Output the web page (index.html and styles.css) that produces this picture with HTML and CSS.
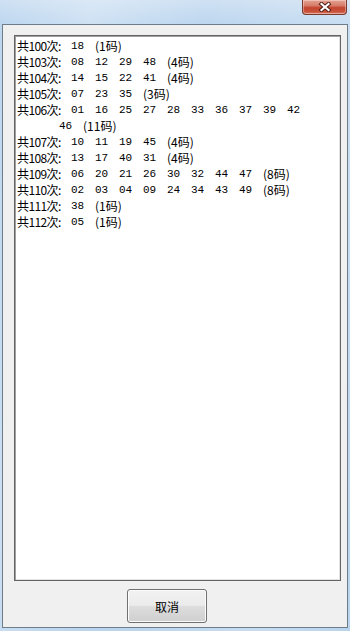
FILE: index.html
```html
<!DOCTYPE html>
<html>
<head>
<meta charset="utf-8">
<link rel="stylesheet" href="styles.css">
</head>
<body>
<div class="window">
  <div class="caption">
    <div class="close">
      <svg width="14" height="10" viewBox="0 0 14 10">
        <path d="M3.5 2 L10.5 8 M10.5 2 L3.5 8" stroke="#4a1a12" stroke-width="4" stroke-linecap="square" fill="none"/>
        <path d="M3.5 2 L10.5 8 M10.5 2 L3.5 8" stroke="#ffffff" stroke-width="2.2" stroke-linecap="square" fill="none"/>
      </svg>
    </div>
  </div>
  <div class="client">
    <div class="textbox">
      <div class="row"><span class="lbl">共100次:</span><span class="n">18</span><span class="c">(1码)</span></div>
      <div class="row"><span class="lbl">共103次:</span><span class="n">08</span><span class="n">12</span><span class="n">29</span><span class="n">48</span><span class="c">(4码)</span></div>
      <div class="row"><span class="lbl">共104次:</span><span class="n">14</span><span class="n">15</span><span class="n">22</span><span class="n">41</span><span class="c">(4码)</span></div>
      <div class="row"><span class="lbl">共105次:</span><span class="n">07</span><span class="n">23</span><span class="n">35</span><span class="c">(3码)</span></div>
      <div class="row"><span class="lbl">共106次:</span><span class="n">01</span><span class="n">16</span><span class="n">25</span><span class="n">27</span><span class="n">28</span><span class="n">33</span><span class="n">36</span><span class="n">37</span><span class="n">39</span><span class="n">42</span></div>
      <div class="row wrap"><span class="n">46</span><span class="c">(11码)</span></div>
      <div class="row"><span class="lbl">共107次:</span><span class="n">10</span><span class="n">11</span><span class="n">19</span><span class="n">45</span><span class="c">(4码)</span></div>
      <div class="row"><span class="lbl">共108次:</span><span class="n">13</span><span class="n">17</span><span class="n">40</span><span class="n">31</span><span class="c">(4码)</span></div>
      <div class="row"><span class="lbl">共109次:</span><span class="n">06</span><span class="n">20</span><span class="n">21</span><span class="n">26</span><span class="n">30</span><span class="n">32</span><span class="n">44</span><span class="n">47</span><span class="c">(8码)</span></div>
      <div class="row"><span class="lbl">共110次:</span><span class="n">02</span><span class="n">03</span><span class="n">04</span><span class="n">09</span><span class="n">24</span><span class="n">34</span><span class="n">43</span><span class="n">49</span><span class="c">(8码)</span></div>
      <div class="row"><span class="lbl">共111次:</span><span class="n">38</span><span class="c">(1码)</span></div>
      <div class="row"><span class="lbl">共112次:</span><span class="n">05</span><span class="c">(1码)</span></div>
    </div>
    <div class="actions">
      <button class="btn">取消</button>
    </div>
  </div>
</div>
</body>
</html>
```
FILE: styles.css
```css
html, body {
  margin: 0;
  padding: 0;
}
body {
  width: 350px;
  height: 631px;
  overflow: hidden;
  font-family: "Noto Sans CJK SC", "Liberation Sans", sans-serif;
  font-size: 12px;
  color: #000;
}
.window {
  width: 350px;
  height: 631px;
  box-sizing: border-box;
  padding: 0 2px 3px 2px;
  display: flex;
  flex-direction: column;
  background:
    linear-gradient(100deg, rgba(255,255,255,0) 0%, rgba(255,255,255,0.25) 20%, rgba(255,255,255,0) 45%, rgba(255,255,255,0.2) 80%, rgba(255,255,255,0) 100%),
    linear-gradient(180deg, #cfe1f3 0%, #bcd6ef 4%, #b9d4ee 100%);
}
.caption {
  height: 24px;
  flex: none;
  display: flex;
  justify-content: flex-end;
  align-items: flex-start;
  padding-right: 1px;
}
.close {
  width: 45px;
  height: 15px;
  box-sizing: border-box;
  border: 1px solid #7a3a30;
  border-top: none;
  border-radius: 0 0 4px 4px;
  background: linear-gradient(180deg, #e6a292 0%, #d67d6a 40%, #c4452f 55%, #c9533c 85%, #dd8a74 100%);
  box-shadow: inset 0 0 0 1px rgba(255,255,255,0.35);
  display: flex;
  align-items: center;
  justify-content: center;
}
.close svg {
  display: block;
  margin-top: -1px;
}
.client {
  flex: 1;
  box-sizing: border-box;
  border: 1px solid #6f7c8a;
  background: #f0f0f0;
  display: flex;
  flex-direction: column;
  padding: 10px 6px 4px 11px;
}
.textbox {
  height: 546px;
  box-sizing: border-box;
  background: #fff;
  border: 1px solid #646464;
  box-shadow: inset 1px 1px 0 #a0a0a0, inset -1px -1px 0 #e3e3e3;
  padding: 2px 2px;
  font-size: 12px;
  line-height: 16px;
}
.row {
  display: flex;
  height: 16px;
  white-space: pre;
}
.row.wrap {
  padding-left: 42px;
}
.lbl {
  width: 54px;
  flex: none;
  letter-spacing: -0.6px;
}
.n {
  width: 24px;
  flex: none;
  font-family: "Liberation Mono", "DejaVu Sans Mono", monospace;
  font-size: 11px;
}
.c {
  flex: none;
}
.actions {
  display: flex;
  justify-content: flex-start;
  padding-top: 8px;
  padding-left: 113px;
}
.btn {
  width: 80px;
  height: 34px;
  border: 1px solid #707070;
  border-radius: 3px;
  background: linear-gradient(180deg, #f2f2f2 0%, #ebebeb 48%, #dddddd 52%, #cfcfcf 100%);
  box-shadow: inset 0 0 0 1px #fcfcfc;
  font-family: "Noto Sans CJK SC", sans-serif;
  font-size: 12px;
  color: #000;
  padding: 0;
}
```
